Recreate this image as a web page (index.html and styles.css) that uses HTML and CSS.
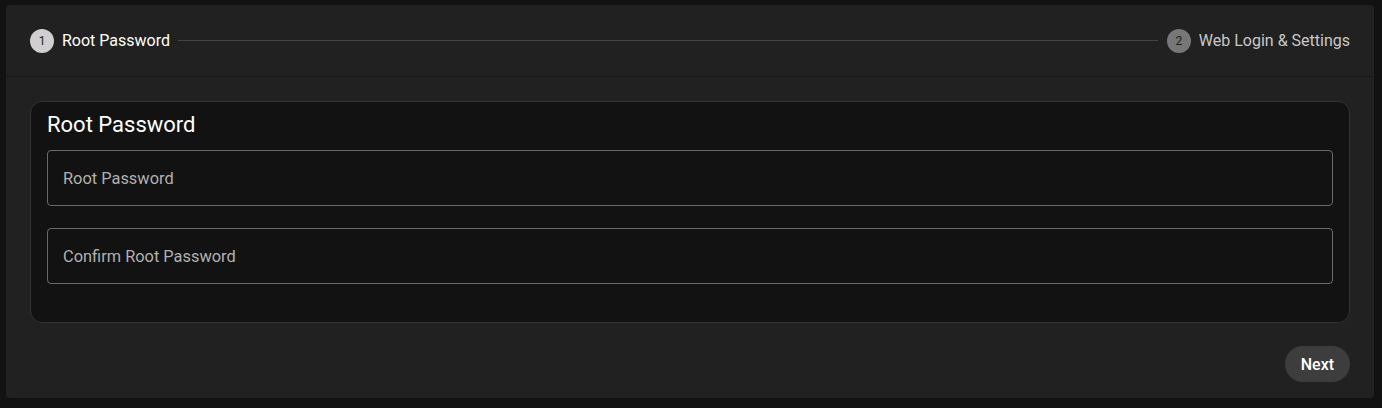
FILE: index.html
```html
<!DOCTYPE html>
<html lang="en">
<head>
<meta charset="utf-8">
<title>Setup</title>
<link rel="stylesheet" href="styles.css">
</head>
<body>
<div class="wizard">
  <div class="stepper">
    <div class="step active">
      <span class="step-num">1</span>
      <span class="step-label">Root Password</span>
    </div>
    <div class="step-line"></div>
    <div class="step">
      <span class="step-num">2</span>
      <span class="step-label">Web Login &amp; Settings</span>
    </div>
  </div>
  <div class="content">
    <section class="card">
      <h2 class="card-title">Root Password</h2>
      <div class="field"><span class="field-label">Root Password</span></div>
      <div class="field"><span class="field-label">Confirm Root Password</span></div>
    </section>
    <div class="actions">
      <button class="btn-next" type="button">Next</button>
    </div>
  </div>
</div>
</body>
</html>
```
FILE: styles.css
```css
* { box-sizing: border-box; }
html, body { background: #121212; }
body {
  margin: 0;
  padding: 5px 8px 10px 6px;
  font-family: Roboto, "Liberation Sans", sans-serif;
  color: #fff;
}
.wizard {
  width: 1368px;
  height: 393px;
  background: #212121;
  border-radius: 4px;
  display: flex;
  flex-direction: column;
}
.stepper {
  height: 72px;
  display: flex;
  align-items: center;
  padding: 0 24px;
  border-bottom: 1px solid #1a1a1a;
}
.step {
  display: flex;
  align-items: center;
  gap: 8px;
}
.step-num {
  width: 24px;
  height: 24px;
  border-radius: 50%;
  background: #777;
  color: #1e1e1e;
  font-size: 12px;
  display: flex;
  align-items: center;
  justify-content: center;
}
.step.active .step-num { background: #cfcfcf; color: #222; }
.step-label {
  font-size: 16px;
  color: #c8c8c8;
}
.step.active .step-label { color: #fff; }
.step-line {
  flex: 1;
  height: 1px;
  background: #444;
  margin: 0 9px 0 8px;
}
.content {
  flex: 1;
  padding: 24px 24px 16px;
  display: flex;
  flex-direction: column;
}
.card {
  background: #121212;
  border: 1px solid #333;
  border-radius: 12px;
  padding: 10px 16px 38px;
  display: flex;
  flex-direction: column;
  gap: 22px;
}
.card-title {
  margin: 0 0 -10px;
  font-size: 22px;
  font-weight: 400;
  line-height: 26px;
  color: #fff;
}
.field {
  height: 56px;
  border: 1px solid #6a6a6a;
  border-radius: 4px;
  display: flex;
  align-items: center;
  padding: 0 15px;
}
.field-label {
  font-size: 16.4px;
  color: #b0b0b0;
}
.actions {
  margin-top: auto;
  display: flex;
  justify-content: flex-end;
}
.btn-next {
  height: 36px;
  padding: 0 16px;
  border: none;
  border-radius: 18px;
  background: #3d3d3d;
  color: #fff;
  font-family: inherit;
  font-size: 16px;
  font-weight: 500;
}
```
